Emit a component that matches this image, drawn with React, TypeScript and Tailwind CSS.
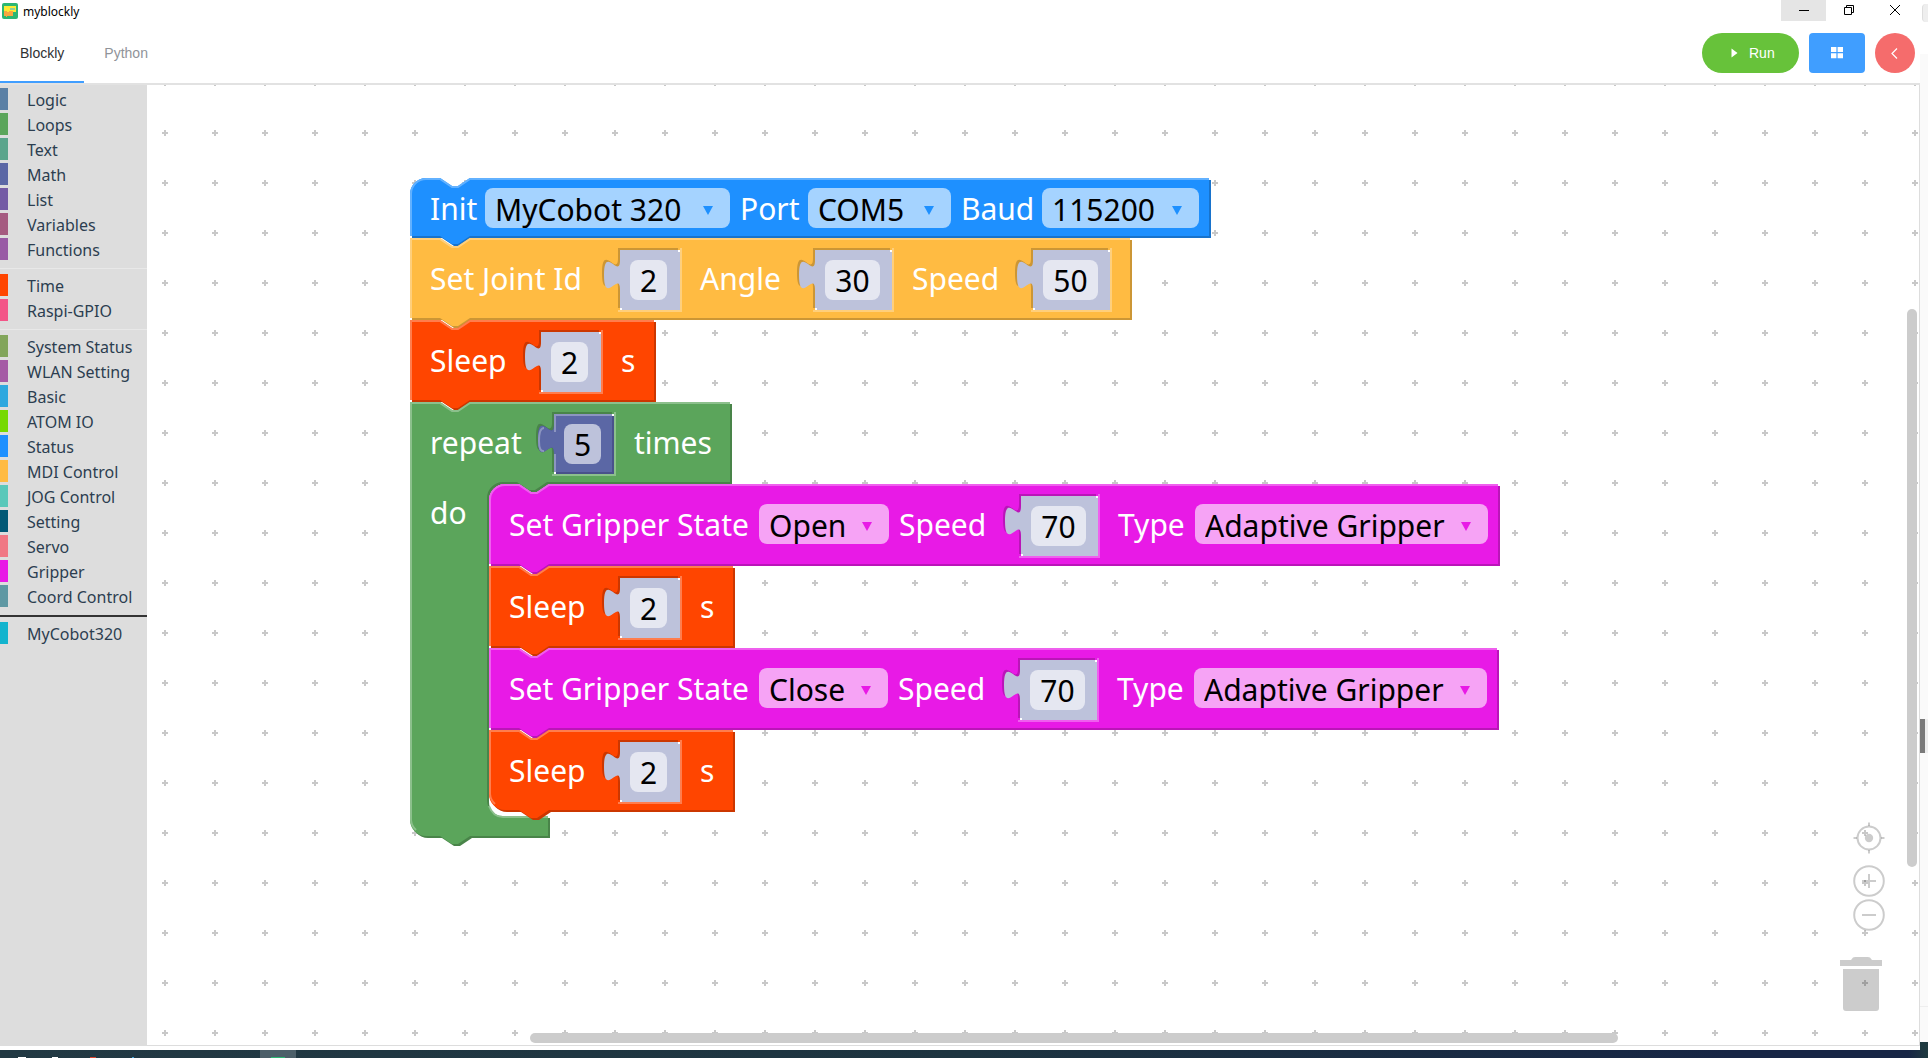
import { useState, type ReactNode } from "react";

type Palette = { base: string; light: string; dark: string };

const BLUE: Palette = { base: "#1e90ff", light: "#62b1ff", dark: "#1873cc" };
const AMBER: Palette = { base: "#ffbb42", light: "#ffcf7b", dark: "#cc9635" };
const ORANGE: Palette = { base: "#ff4500", light: "#ff7d4d", dark: "#cc3700" };
const GREEN: Palette = { base: "#5ba55b", light: "#8cc08c", dark: "#498449" };
const MAGENTA: Palette = { base: "#e81ae6", light: "#ef5fee", dark: "#ba15b8" };

const CATEGORY_GROUPS: { name: string; swatch: string }[][] = [
  [
    { name: "Logic", swatch: "bg-[#5b80a5]" },
    { name: "Loops", swatch: "bg-[#5ba55b]" },
    { name: "Text", swatch: "bg-[#5ba58c]" },
    { name: "Math", swatch: "bg-[#5b67a5]" },
    { name: "List", swatch: "bg-[#745ba5]" },
    { name: "Variables", swatch: "bg-[#a55b80]" },
    { name: "Functions", swatch: "bg-[#995ba5]" },
  ],
  [
    { name: "Time", swatch: "bg-[#ff4500]" },
    { name: "Raspi-GPIO", swatch: "bg-[#f35588]" },
  ],
  [
    { name: "System Status", swatch: "bg-[#82a55b]" },
    { name: "WLAN Setting", swatch: "bg-[#a55ba5]" },
    { name: "Basic", swatch: "bg-[#2ea8df]" },
    { name: "ATOM IO", swatch: "bg-[#76d900]" },
    { name: "Status", swatch: "bg-[#1e90ff]" },
    { name: "MDI Control", swatch: "bg-[#ffbb42]" },
    { name: "JOG Control", swatch: "bg-[#5ac8ba]" },
    { name: "Setting", swatch: "bg-[#005875]" },
    { name: "Servo", swatch: "bg-[#f07884]" },
    { name: "Gripper", swatch: "bg-[#e81ae6]" },
    { name: "Coord Control", swatch: "bg-[#5f98a3]" },
  ],
  [{ name: "MyCobot320", swatch: "bg-[#13b4ce]" }],
];

const NOTCH = "l12,8 h6 l12,-8";
const NOTCH_BACK = "l-12,8 h-6 l-12,-8";

function BlockShape({
  palette,
  outline,
  highlight,
}: {
  palette: Palette;
  outline: string;
  highlight: string;
}) {
  return (
    <svg className="absolute left-0 top-0 h-px w-px overflow-visible" aria-hidden="true">
      <path d={outline} fill={palette.dark} transform="translate(2 2)" />
      <path d={outline} fill={palette.base} />
      <path d={highlight} fill="none" stroke={palette.light} strokeWidth="2" />
    </svg>
  );
}

function Block({
  palette,
  width,
  height = 80,
  roundTop = false,
  roundBottom = false,
  children,
}: {
  palette: Palette;
  width: number;
  height?: number;
  roundTop?: boolean;
  roundBottom?: boolean;
  children: ReactNode;
}) {
  const start = roundTop ? "M0,16 A16,16 0 0 1 16,0" : "M0,0";
  const end = roundBottom ? `H16 A16,16 0 0 1 0,${height - 16} Z` : "H0 Z";
  const outline = `${start} H30 ${NOTCH} H${width} V${height} H60 ${NOTCH_BACK} ${end}`;
  const lightStart = roundBottom
    ? `M6,${height - 6} A15,15 0 0 1 1,${height - 16}`
    : `M1,${height}`;
  const lightCorner = roundTop ? "V16 A15,15 0 0 1 16,1" : "V1";
  const highlight = `${lightStart} ${lightCorner} H30 ${NOTCH} H${width}`;
  return (
    <div className="relative w-max">
      <BlockShape palette={palette} outline={outline} highlight={highlight} />
      <div
        className={
          height === 58
            ? "relative flex h-[60px] items-start gap-2.5 pl-5 pr-2.5 pt-2.5"
            : "relative flex h-[82px] items-start gap-2.5 pl-5 pr-2.5 pt-5"
        }
      >
        {children}
      </div>
    </div>
  );
}

function Label({ width, children }: { width: string; children: ReactNode }) {
  return (
    <span className={`${width} h-10 shrink-0 whitespace-nowrap leading-[42px] text-white`}>
      {children}
    </span>
  );
}

function Dropdown({
  label,
  value,
  palette,
  className,
}: {
  label: string;
  value: string;
  palette: Palette;
  className: string;
}) {
  return (
    <span className={`${className} relative h-10 shrink-0 rounded-lg`}>
      <select
        aria-label={label}
        defaultValue={value}
        className="h-10 w-full appearance-none bg-transparent pl-2.5 pt-0.5 text-black outline-none"
      >
        <option>{value}</option>
      </select>
      <svg
        className="pointer-events-none absolute right-[17px] top-[18px]"
        width="10"
        height="9"
        viewBox="0 0 10 9"
        aria-hidden="true"
      >
        <path d="M0,0 H10 L5,9 Z" fill={palette.base} />
      </svg>
    </span>
  );
}

function Socket({
  label,
  value,
  palette,
  solid = false,
}: {
  label: string;
  value: string;
  palette: Palette;
  solid?: boolean;
}) {
  const wide = value.length > 1;
  const w = wide ? 77 : 60;
  const tab = "c0,20 -16,-16 -16,15 s16,-5 16,15";
  const shape = `M0,0 V10 ${tab} V60 H${w} V0 Z`;
  return (
    <span
      className={`${wide ? "w-[77px]" : "w-[60px]"} relative -mt-2 mr-2.5 ml-[26px] block h-[60px] shrink-0 px-2.5 py-2.5`}
    >
      <svg className="absolute left-0 top-0 h-px w-px overflow-visible" aria-hidden="true">
        <path d={shape} fill={palette.dark} transform="translate(-2 -2)" />
        <path d={`M${w + 1},-2 V61 H-2`} fill="none" stroke={palette.light} strokeWidth="2" />
        {solid ? (
          <>
            <path d={shape} fill="#49528a" />
            <path d={`M0,0 V10 ${tab} V58 H${w - 2} V0 Z`} fill="#5b67a5" />
            <path
              d={`M1,58 V40 M-10,37 Q-15,38 -15,27 Q-15,14 -10,14 M1,18 V1 H${w - 2}`}
              fill="none"
              stroke="#8c95c0"
              strokeWidth="2"
            />
          </>
        ) : (
          <path d={shape} fill="#bdc2db" />
        )}
        <path d={`M${w - 2},0 h2 v2 h-2 Z M0,58 h2 v2 h-2 Z`} fill="#ffffff" />
      </svg>
      <input
        aria-label={label}
        defaultValue={value}
        className={`${wide ? "w-[55px]" : "w-[37px]"} ${solid ? "bg-[#bdc2db]" : "bg-[#e5e7f1]"} relative block h-10 rounded-lg pt-0.5 text-center text-black outline-none`}
      />
    </span>
  );
}

function SleepBlock({ roundBottom = false }: { roundBottom?: boolean }) {
  return (
    <Block palette={ORANGE} width={244} roundBottom={roundBottom}>
      <Label width="w-[75px]">Sleep</Label>
      <Socket label="Sleep seconds" value="2" palette={ORANGE} />
      <Label width="w-[23px]">s</Label>
    </Block>
  );
}

function GripperBlock({ state, roundTop = false }: { state: "Open" | "Close"; roundTop?: boolean }) {
  const open = state === "Open";
  return (
    <Block palette={MAGENTA} width={open ? 1009 : 1008} roundTop={roundTop}>
      <Label width="w-[240px]">Set Gripper State</Label>
      <Dropdown
        label="Gripper state"
        value={state}
        palette={MAGENTA}
        className={open ? "w-[130px] bg-[#f6a3f5]" : "w-[129px] bg-[#f6a3f5]"}
      />
      <Label width="w-[86px]">Speed</Label>
      <Socket label="Gripper speed" value="70" palette={MAGENTA} />
      <Label width="w-[67px]">Type</Label>
      <Dropdown
        label="Gripper type"
        value="Adaptive Gripper"
        palette={MAGENTA}
        className="w-[293px] bg-[#f6a3f5]"
      />
    </Block>
  );
}

function RepeatBlock() {
  const outline = [
    `M0,0 H30 ${NOTCH} H320 V80 H137 ${NOTCH_BACK} H93`,
    "A16,16 0 0 0 77,96 V398 A16,16 0 0 0 93,414",
    `H138 V434 H60 ${NOTCH_BACK} H16 A16,16 0 0 1 0,418 Z`,
  ].join(" ");
  const highlight = `M6,428 A15,15 0 0 1 1,418 V1 H30 ${NOTCH} H320 M79,404 Q83,415 93,415 H138`;
  return (
    <div className="relative w-max pb-[26px]">
      <BlockShape palette={GREEN} outline={outline} highlight={highlight} />
      <div className="relative flex h-[82px] items-start gap-2.5 pl-5 pt-5">
        <Label width="w-[88px]">repeat</Label>
        <Socket label="Repeat count" value="5" palette={GREEN} solid />
        <Label width="w-[86px]">times</Label>
      </div>
      <div className="relative flex items-start">
        <div className="flex w-[79px] shrink-0 pl-5 pt-2">
          <Label width="w-10">do</Label>
        </div>
        <div className="flex flex-col">
          <GripperBlock state="Open" roundTop />
          <SleepBlock />
          <GripperBlock state="Close" />
          <SleepBlock roundBottom />
        </div>
      </div>
    </div>
  );
}

function Program() {
  return (
    <div className="absolute left-[263px] top-[93px] flex flex-col text-[30px] leading-10">
      <Block palette={BLUE} width={799} height={58} roundTop>
        <Label width="w-[45px]">Init</Label>
        <Dropdown label="Robot" value="MyCobot 320" palette={BLUE} className="w-[245px] bg-[#a5d3ff]" />
        <Label width="w-[58px]">Port</Label>
        <Dropdown label="Port" value="COM5" palette={BLUE} className="w-[143px] bg-[#a5d3ff]" />
        <Label width="w-[71px]">Baud</Label>
        <Dropdown label="Baud" value="115200" palette={BLUE} className="w-[157px] bg-[#a5d3ff]" />
      </Block>
      <Block palette={AMBER} width={720}>
        <Label width="w-[154px]">Set Joint Id</Label>
        <Socket label="Joint id" value="2" palette={AMBER} />
        <Label width="w-[79px]">Angle</Label>
        <Socket label="Angle" value="30" palette={AMBER} />
        <Label width="w-[85px]">Speed</Label>
        <Socket label="Joint speed" value="50" palette={AMBER} />
      </Block>
      <SleepBlock />
      <RepeatBlock />
    </div>
  );
}

function WorkspaceGrid() {
  return (
    <svg className="absolute inset-0 h-full w-full" aria-hidden="true">
      <defs>
        <pattern id="grid" width="50" height="50" x="-7" y="23" patternUnits="userSpaceOnUse">
          <path d="M22,25 H28 M25,22 V28" stroke="#c8c8c8" strokeWidth="2" />
        </pattern>
      </defs>
      <rect width="100%" height="100%" fill="url(#grid)" />
    </svg>
  );
}

function WorkspaceControls() {
  return (
    <div className="absolute bottom-[34px] right-[34px] flex flex-col items-end">
      <button type="button" aria-label="Center" className="block">
        <svg width="32" height="32" viewBox="0 0 32 32" fill="none" stroke="#000" strokeOpacity="0.2" strokeWidth="2">
          <circle cx="16" cy="16" r="11.5" />
          <path d="M16,0.5 V4 M16,28 V31.5 M0.5,16 H4 M28,16 H31.5" />
          <circle cx="16" cy="16" r="4.2" fill="#000" fillOpacity="0.2" stroke="none" />
        </svg>
      </button>
      <button type="button" aria-label="Zoom in" className="mt-[11px] block">
        <svg width="32" height="32" viewBox="0 0 32 32" fill="none" stroke="#000" strokeOpacity="0.2" strokeWidth="2">
          <circle cx="16" cy="16" r="14.8" />
          <path d="M9,16 H23 M16,9 V23" />
        </svg>
      </button>
      <button type="button" aria-label="Zoom out" className="mt-0.5 block">
        <svg width="32" height="32" viewBox="0 0 32 32" fill="none" stroke="#000" strokeOpacity="0.2" strokeWidth="2">
          <circle cx="16" cy="16" r="14.8" />
          <path d="M9,16 H23" />
        </svg>
      </button>
      <svg className="mt-[26px]" width="48" height="54" viewBox="0 0 48 54" aria-hidden="true">
        <path
          d="M3,3 H14 L16,0.5 Q17,0 18,0 H31 Q32,0 33,0.5 L35,3 H45 V9 H3 Z M6,12 H42 V51 Q42,54 39,54 H9 Q6,54 6,51 Z"
          fill="#000"
          fillOpacity="0.2"
        />
      </svg>
    </div>
  );
}

function Toolbox() {
  return (
    <nav
      aria-label="Block categories"
      className="w-[147px] shrink-0 bg-[#dddddd] pt-[3px] text-base leading-6 text-[#2c3e50]"
    >
      {CATEGORY_GROUPS.map((group, index) => (
        <div key={group[0].name} className="flex flex-col gap-[3px]">
          {index > 0 && (
            <div className={index === 3 ? "mb-0.5 mt-2 h-0.5 bg-[#333333]" : "mb-0.5 mt-2 h-px bg-[#e8e8e8]"} />
          )}
          {group.map((category) => (
            <button key={category.name} type="button" className="flex h-[22px] w-full items-start text-left">
              <span className={`${category.swatch} mr-[19px] h-full w-2 shrink-0`} />
              <span className="whitespace-nowrap">{category.name}</span>
            </button>
          ))}
        </div>
      ))}
    </nav>
  );
}

function TitleBar() {
  return (
    <div className="flex h-[22px] items-start justify-between">
      <div className="flex items-start gap-[5px] pl-0.5 pt-[3px]">
        <svg width="16" height="16" viewBox="0 0 16 16" aria-hidden="true">
          <rect width="16" height="16" rx="2" fill="#2bb673" />
          <path d="M2,3 H14 V9 H2 Z" fill="#fdea33" />
          <path d="M8,5 H13 V7 H8 Z" fill="#8ccf9c" />
          <path d="M2,8 H5 V9 H7 V8 H11 V13 H5 V14 H4 V13 H2 Z" fill="#f9a63f" />
        </svg>
        <span className="text-xs leading-[18px] text-black">myblockly</span>
      </div>
      <div className="flex pr-0.5">
        <button type="button" aria-label="Minimize" className="flex h-[21px] w-[45px] justify-center bg-[#e5e5e5] pt-[5px]">
          <svg width="10" height="10" viewBox="0 0 10 10" stroke="#000" fill="none">
            <path d="M0,5.5 H10" />
          </svg>
        </button>
        <button type="button" aria-label="Restore" className="flex h-[21px] w-[46px] justify-center pt-[5px]">
          <svg width="10" height="10" viewBox="0 0 10 10" stroke="#000" fill="none">
            <path d="M0.5,2.5 H7.5 V9.5 H0.5 Z M2.5,2.5 V0.5 H9.5 V7.5 H7.5" />
          </svg>
        </button>
        <button type="button" aria-label="Close" className="flex h-[21px] w-[46px] justify-center pt-[5px]">
          <svg width="10" height="10" viewBox="0 0 10 10" stroke="#000" fill="none">
            <path d="M0,0 L10,10 M10,0 L0,10" />
          </svg>
        </button>
      </div>
    </div>
  );
}

function Header() {
  const [tab, setTab] = useState("Blockly");
  return (
    <header className="flex h-[63px] items-start justify-between border-b-2 border-[#e2e2e2] font-['Liberation_Sans',Arial,sans-serif] text-sm">
      <div role="tablist" className="flex h-[61px]">
        {["Blockly", "Python"].map((name) => (
          <button
            key={name}
            type="button"
            role="tab"
            aria-selected={tab === name}
            onClick={() => setTab(name)}
            className={
              tab === name
                ? "h-full border-b-2 border-[#409eff] px-5 pt-0.5 text-[#303133]"
                : "h-full border-b-2 border-transparent px-5 pt-0.5 text-[#909399]"
            }
          >
            {name}
          </button>
        ))}
      </div>
      <div className="flex gap-2.5 pr-[5px] pt-[11px] text-white">
        <button type="button" className="flex h-10 w-[97px] items-center rounded-full bg-[#67c23a] pl-[29px]">
          <svg width="7" height="10" viewBox="0 0 7 10" aria-hidden="true">
            <path d="M0.5,0.5 L6.5,5 L0.5,9.5 Z" fill="#ffffff" />
          </svg>
          <span className="ml-[11px]">Run</span>
        </button>
        <button type="button" aria-label="Blocks menu" className="flex h-10 w-14 items-center justify-center rounded bg-[#409eff]">
          <svg width="12" height="12" viewBox="0 0 12 12" fill="#ffffff">
            <path d="M0,0 h5.4 v5 h-5.4 Z M6.6,0 h5.4 v5 h-5.4 Z M0,6.2 h5.4 v5 h-5.4 Z M6.6,6.2 h5.4 v5 h-5.4 Z" />
          </svg>
        </button>
        <button type="button" aria-label="Collapse" className="flex size-10 items-center justify-center rounded-full bg-[#f56c6c] pr-0.5">
          <svg width="7" height="11" viewBox="0 0 7 11" fill="none" stroke="#ffffff" strokeWidth="1.2">
            <path d="M6,0.5 L1,5.5 L6,10.5" />
          </svg>
        </button>
      </div>
    </header>
  );
}

export default function App() {
  return (
    <div className="flex h-screen flex-col overflow-hidden bg-white font-['Noto_Sans','Segoe_UI',sans-serif]">
      <div className="flex min-h-0 flex-1">
        <div className="flex min-w-0 flex-1 flex-col">
          <TitleBar />
          <Header />
          <div className="flex min-h-0 flex-1 pb-1">
            <Toolbox />
            <main className="relative min-w-0 flex-1 overflow-hidden border-b border-r border-[#dddddd] bg-white">
              <WorkspaceGrid />
              <Program />
              <WorkspaceControls />
              <div className="absolute right-0.5 top-[224px] h-[558px] w-2.5 rounded-full bg-[#cccccc]" />
              <div className="absolute bottom-0.5 left-[383px] right-[301px] h-2.5 rounded-full bg-[#cccccc]" />
            </main>
          </div>
        </div>
        <aside className="flex w-2 shrink-0 flex-col">
          <div className="mt-1 ml-0.5 h-[18px] rounded-l border-l border-[#dddddd] bg-[#eeeeee]" />
          <div className="mt-8 flex flex-1 flex-col bg-[#fafafa]">
            <div className="mt-[665px] h-[34px] border-l-[5px] border-[#7a7a7a] bg-[#eeeeee]" />
            <div className="mt-auto h-[36px] border-t border-[#eeeeee]" />
          </div>
          <div className="h-2 bg-[#1f3a40]" />
        </aside>
      </div>
      <div className="flex h-2 shrink-0 bg-[linear-gradient(90deg,#223943_0%,#1d3440_50%,#172645_90%,#172645_99%,#1f3a40_100%)] pl-[18px]">
        <div className="mt-[7px] h-px w-2 bg-white" />
        <div className="mt-[7px] ml-[26px] h-px w-1.5 bg-white" />
        <div className="mt-[7px] ml-8 h-px w-1.5 bg-[#d8452f]" />
        <div className="mt-[7px] ml-9 h-px w-0.5 bg-[#3f9fd8]" />
        <div className="ml-[126px] h-full w-9 bg-[#4c5f69] px-[11px] pt-[7px]">
          <div className="h-px bg-[#2bb673]" />
        </div>
      </div>
    </div>
  );
}
